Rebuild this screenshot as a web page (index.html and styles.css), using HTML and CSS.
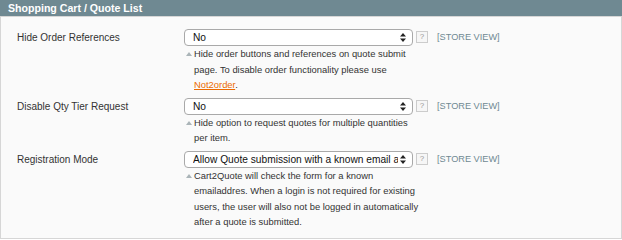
FILE: index.html
```html
<!DOCTYPE html>
<html lang="en">
<head>
  <meta charset="UTF-8">
  <title>Shopping Cart / Quote List</title>
  <link rel="stylesheet" href="styles.css">
</head>
<body>

  <div class="section">
    <div class="section-head">Shopping Cart / Quote List</div>

    <div class="section-body">
      <!-- Hide Order References -->
      <div class="row">
        <div class="label">Hide Order References</div>
        <div class="value">
          <div class="select">
            <span class="select-text">No</span>
            <svg class="arrows" width="6" height="9" viewBox="0 0 6 9"><path d="M3 0 L6 3.5 L0 3.5 Z M0 5.5 L6 5.5 L3 9 Z" fill="#222"/></svg>
          </div>
          <p class="note">Hide order buttons and references on quote submit<br>page. To disable order functionality please use<br><a href="#">Not2order</a>.</p>
        </div>
        <div class="help">?</div>
        <div class="scope">[STORE VIEW]</div>
      </div>

      <!-- Disable Qty Tier Request -->
      <div class="row">
        <div class="label">Disable Qty Tier Request</div>
        <div class="value">
          <div class="select">
            <span class="select-text">No</span>
            <svg class="arrows" width="6" height="9" viewBox="0 0 6 9"><path d="M3 0 L6 3.5 L0 3.5 Z M0 5.5 L6 5.5 L3 9 Z" fill="#222"/></svg>
          </div>
          <p class="note">Hide option to request quotes for multiple quantities<br>per item.</p>
        </div>
        <div class="help">?</div>
        <div class="scope">[STORE VIEW]</div>
      </div>

      <!-- Registration Mode -->
      <div class="row">
        <div class="label">Registration Mode</div>
        <div class="value">
          <div class="select">
            <span class="select-text">Allow Quote submission with a known email address</span>
            <svg class="arrows" width="6" height="9" viewBox="0 0 6 9"><path d="M3 0 L6 3.5 L0 3.5 Z M0 5.5 L6 5.5 L3 9 Z" fill="#222"/></svg>
          </div>
          <p class="note">Cart2Quote will check the form for a known<br>emailaddres. When a login is not required for existing<br>users, the user will also not be logged in automatically<br>after a quote is submitted.</p>
        </div>
        <div class="help">?</div>
        <div class="scope">[STORE VIEW]</div>
      </div>
    </div>
  </div>

</body>
</html>
```

FILE: styles.css
```css
/* styles.css */
body {
  margin: 0;
  font-family: "Liberation Sans", Arial, sans-serif;
  background-color: #fff;
}

.section {
  width: 622px;
  height: 239px;
  box-sizing: border-box;
  border-left: 1px solid #d6d6d6;
  border-right: 1px solid #d6d6d6;
  border-bottom: 1px solid #d6d6d6;
  background-color: #fafafa;
}

.section-head {
  height: 17px;
  line-height: 16px;
  margin: 0 -1px;
  padding-left: 8px;
  background-color: #6f8992;
  color: #fff;
  font-size: 10.6px;
  font-weight: bold;
  border-bottom: 1px solid #d6d6d6;
  box-sizing: border-box;
}

.section-body {
  padding-top: 12px;
}

.row {
  display: grid;
  grid-template-columns: 164px 229px 12px auto;
  column-gap: 3px;
  padding-left: 16px;
  margin-bottom: 5px;
}

.label {
  font-size: 10px;
  color: #333;
  line-height: 17px;
}

.value {
  min-width: 0;
}

.select {
  height: 17px;
  box-sizing: border-box;
  border: 1px solid #a9a9a9;
  border-radius: 4px;
  background-color: #fff;
  display: flex;
  align-items: center;
  padding: 0 6px 0 8px;
  font-size: 10.2px;
  color: #111;
}

.select-text {
  flex: 1;
  white-space: nowrap;
  overflow: hidden;
  margin-right: 2px;
}

.note {
  margin: 0;
  padding-left: 10px;
  width: 230px;
  position: relative;
  font-size: 9.4px;
  line-height: 15.5px;
  color: #333;
  white-space: nowrap;
}

.note::before {
  content: "";
  position: absolute;
  left: 2px;
  top: 6px;
  border-left: 3px solid transparent;
  border-right: 3px solid transparent;
  border-bottom: 4px solid #aab4b8;
}

.note a {
  color: #eb6a00;
}

.help {
  width: 12px;
  height: 12px;
  margin-top: 2px;
  box-sizing: border-box;
  border: 1px solid #ccc;
  font-size: 8px;
  line-height: 10px;
  text-align: center;
  color: #999;
  background-color: #f6f6f6;
}

.scope {
  padding-left: 6px;
  font-size: 9.2px;
  line-height: 17px;
  color: #6f8992;
}
```
